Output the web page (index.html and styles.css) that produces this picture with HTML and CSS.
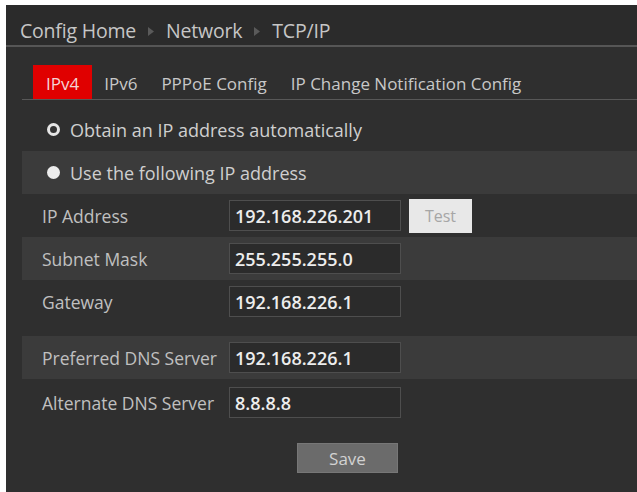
FILE: index.html
```html
<!DOCTYPE html>
<html>
<head>
<meta charset="utf-8">
<link rel="stylesheet" href="styles.css">
</head>
<body>
<div class="panel">
  <div class="crumbs">
    <span>Config Home</span>
    <svg class="sep" width="6" height="9" viewBox="0 0 6 9"><path d="M0 0 L6 4.5 L0 9 Z" fill="#5a5a5a"/></svg>
    <span>Network</span>
    <svg class="sep" width="6" height="9" viewBox="0 0 6 9"><path d="M0 0 L6 4.5 L0 9 Z" fill="#5a5a5a"/></svg>
    <span>TCP/IP</span>
  </div>
  <div class="content">
    <div class="tabs">
      <span class="tab active">IPv4</span>
      <span class="tab">IPv6</span>
      <span class="tab">PPPoE Config</span>
      <span class="tab">IP Change Notification Config</span>
    </div>
    <div class="row first"><span class="radio ring"></span>Obtain an IP address automatically</div>
    <div class="row band"><span class="radio dot"></span>Use the following IP address</div>
    <div class="field"><span class="label">IP Address</span><span class="input">192.168.226.201</span><span class="test">Test</span></div>
    <div class="field band"><span class="label">Subnet Mask</span><span class="input">255.255.255.0</span></div>
    <div class="field"><span class="label">Gateway</span><span class="input">192.168.226.1</span></div>
    <div class="field band gap"><span class="label">Preferred DNS Server</span><span class="input">192.168.226.1</span></div>
    <div class="field alt"><span class="label">Alternate DNS Server</span><span class="input">8.8.8.8</span></div>
    <div class="actions"><span class="save">Save</span></div>
  </div>
</div>
</body>
</html>
```
FILE: styles.css
```css
html, body {
  margin: 0;
  padding: 0;
  background: #ffffff;
}
body {
  font-family: "Open Sans", "Noto Sans", sans-serif;
  color: #c4c4c4;
}
.panel {
  margin: 5px 0 0 6px;
  height: 487px;
  background: #2f2f2f;
  overflow: hidden;
}
.crumbs {
  height: 42px;
  box-sizing: border-box;
  padding: 10px 0 0 14px;
  display: flex;
  align-items: center;
  gap: 12px;
  font-size: 19.5px;
  letter-spacing: -0.2px;
  color: #c6c6c6;
  background: #2b2b2b;
  border-bottom: 2px solid #565656;
}
.sep {
  margin-top: 2px;
}
.content {
  padding-left: 16px;
}
.tabs {
  margin-top: 18px;
  padding-left: 11px;
  height: 34px;
  display: flex;
  border-bottom: 1px solid #585858;
}
.tab {
  display: flex;
  align-items: center;
  padding: 2px 12px 0;
  font-size: 17px;
  color: #c8c8c8;
}
.tab.active {
  background: #e00000;
  color: #f4d4d4;
  padding: 2px 13px 0;
}
.row {
  height: 43px;
  display: flex;
  align-items: center;
  padding-left: 25px;
  font-size: 18px;
  color: #cfcfcf;
}
.row.first {
  margin-top: 8px;
}
.band {
  background: #3b3b3b;
}
.radio {
  width: 13px;
  height: 13px;
  box-sizing: border-box;
  border-radius: 50%;
  margin-right: 10px;
  flex: none;
}
.radio.ring {
  border: 3px solid #e6e6e6;
  background: #333;
}
.radio.dot {
  background: #ececec;
}
.field {
  height: 43px;
  display: flex;
  align-items: center;
  padding-left: 20px;
  font-size: 17.5px;
  color: #c0c0c0;
}
.field.gap {
  margin-top: 13px;
}
.field.alt {
  margin-top: 2px;
}
.label {
  width: 187px;
  flex: none;
}
.input {
  width: 172px;
  height: 31px;
  box-sizing: border-box;
  border: 1px solid #4e4e4e;
  background: #2b2b2b;
  display: flex;
  align-items: center;
  padding-left: 5px;
  font-size: 18px;
  font-weight: 600;
  color: #ededed;
}
.test {
  margin-left: 8px;
  width: 63px;
  height: 34px;
  background: #e8e8e8;
  color: #a6a6a6;
  display: flex;
  align-items: center;
  justify-content: center;
  font-size: 16px;
}
.actions {
  padding: 19px 0 0 275px;
}
.save {
  width: 101px;
  height: 30px;
  box-sizing: border-box;
  background: #6b6b6b;
  border: 1px solid #777;
  color: #d2d2d2;
  display: flex;
  align-items: center;
  justify-content: center;
  font-size: 17px;
}
```
